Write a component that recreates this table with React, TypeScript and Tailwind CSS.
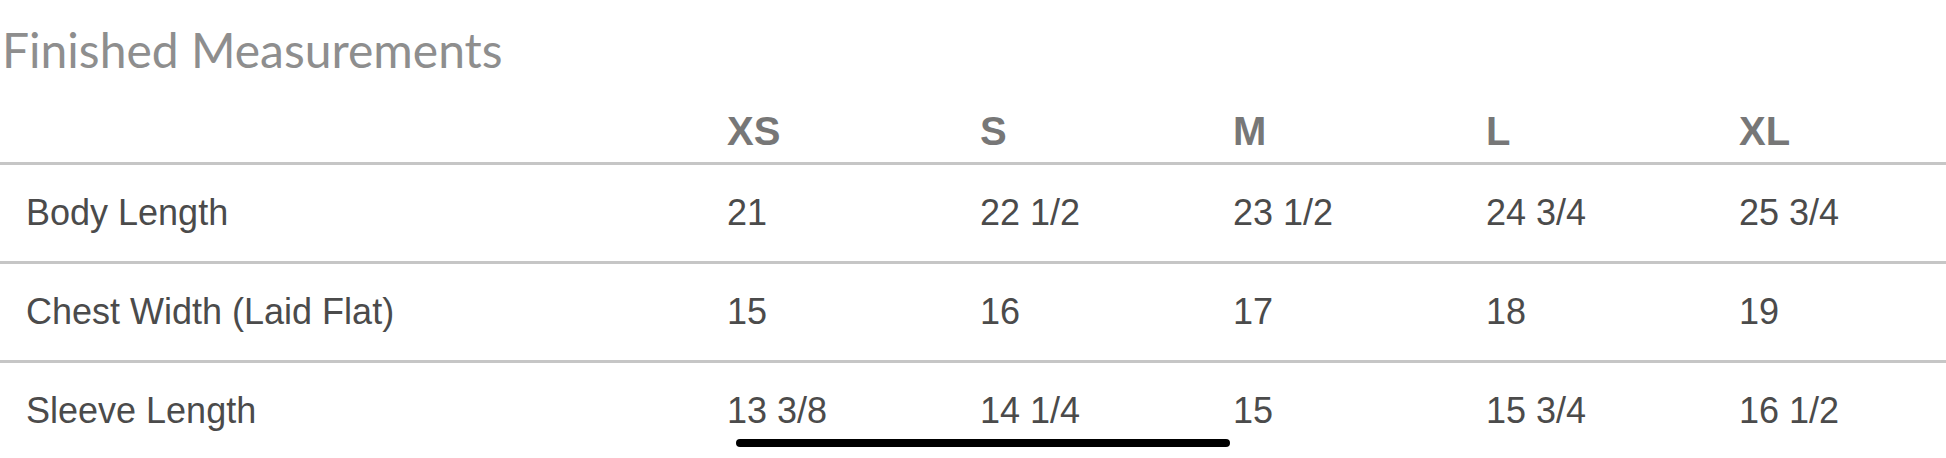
import React from 'react';

const sizes = ['XS', 'S', 'M', 'L', 'XL'];

const rows = [
  { label: 'Body Length', values: ['21', '22 1/2', '23 1/2', '24 3/4', '25 3/4'] },
  { label: 'Chest Width (Laid Flat)', values: ['15', '16', '17', '18', '19'] },
  { label: 'Sleeve Length', values: ['13 3/8', '14 1/4', '15', '15 3/4', '16 1/2'] },
];

export default function App() {
  return (
    <div className="relative w-[1946px] h-[458px] overflow-hidden bg-white">
      <h2 className="h-[100px] pt-[26px] pl-[2px] font-['Lato',sans-serif] text-[48px] leading-[48px] font-normal text-[#8e8e8e]">
        Finished Measurements
      </h2>

      <div className="font-['Liberation_Sans',Arial,sans-serif]">
        <div className="grid grid-cols-[701px_repeat(5,253px)] border-b-[3px] border-[#c6c6c6]">
          <div />
          {sizes.map(size => (
            <div
              key={size}
              className="py-[11px] pl-[26px] text-[40px] leading-[40px] font-bold text-[#777777]"
            >
              {size}
            </div>
          ))}
        </div>

        {rows.map((row, i) => (
          <div
            key={row.label}
            className={`grid grid-cols-[701px_repeat(5,253px)] ${i < rows.length - 1 ? 'border-b-[3px] border-[#c6c6c6]' : ''}`}
          >
            <div className="py-[30px] pl-[26px] text-[36px] leading-[36px] text-[#4b4b4b]">
              {row.label}
            </div>
            {row.values.map((v, j) => (
              <div
                key={j}
                className="py-[30px] pl-[26px] text-[36px] leading-[36px] text-[#4b4b4b]"
              >
                {v}
              </div>
            ))}
          </div>
        ))}
      </div>

      {/* horizontal scroll indicator */}
      <div className="absolute left-[736px] top-[439px] w-[494px] h-[8px] rounded-full bg-black" />
    </div>
  );
}
